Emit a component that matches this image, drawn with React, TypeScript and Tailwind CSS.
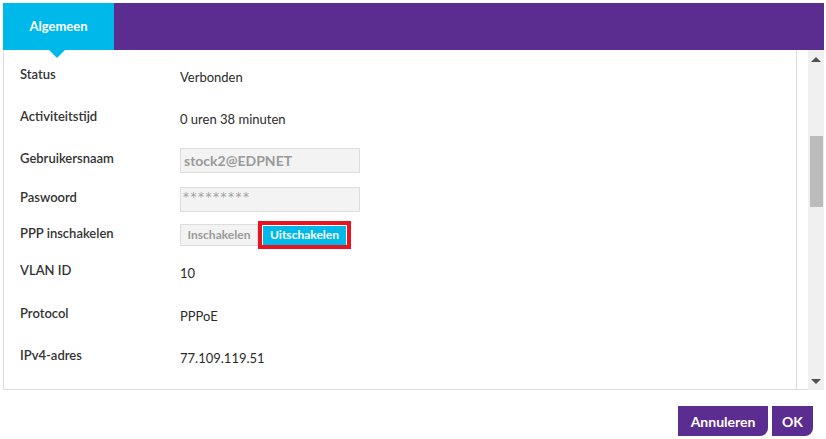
import React from "react";

const font = { fontFamily: "Lato, 'Open Sans', sans-serif" };

type Row = { label: string; h: string; value: React.ReactNode };

function TextValue({ children }: { children: React.ReactNode }) {
  return <span className="mt-[6px] text-[13px] text-[#2b2b2b]">{children}</span>;
}

export default function App() {
  const rows: Row[] = [
    { label: "Status", h: "h-[42px]", value: <TextValue>Verbonden</TextValue> },
    { label: "Activiteitstijd", h: "h-[42px]", value: <TextValue>0 uren 38 minuten</TextValue> },
    {
      label: "Gebruikersnaam",
      h: "h-[42px]",
      value: (
        <div className="mt-[3px] flex h-[25px] w-[180px] items-center border border-[#ddd] bg-[#f3f3f3] px-[3px] text-[14px] font-bold text-[#9a9a9a]">
          stock2@EDPNET
        </div>
      ),
    },
    {
      label: "Paswoord",
      h: "h-[36px]",
      value: (
        <div className="mt-[3px] flex h-[25px] w-[180px] items-start border border-[#ddd] bg-[#f3f3f3] px-[2px] pt-[2px] font-['DejaVu_Sans',sans-serif] text-[12px] leading-[14px] tracking-[1.5px] text-[#a0a0a0]">
          *********
        </div>
      ),
    },
    {
      label: "PPP inschakelen",
      h: "h-[36px]",
      value: (
        <div className="mt-[2px] flex items-center">
          <div className="flex h-[22px] w-[78px] items-center justify-center border border-[#ddd] bg-[#f3f3f3] text-[12px] font-bold text-[#9a9a9a]">
            Inschakelen
          </div>
          <div className="flex h-[28px] w-[93px] items-center justify-center border-[4px] border-[#e8141f] bg-white">
            <div className="flex h-[19px] w-[83px] items-center justify-center bg-[#00b9eb] text-[12px] font-bold text-white">
              Uitschakelen
            </div>
          </div>
        </div>
      ),
    },
    { label: "VLAN ID", h: "h-[38px]", value: <TextValue>10</TextValue> },
    { label: "Protocol", h: "h-[48px]", value: <TextValue>PPPoE</TextValue> },
    { label: "IPv4-adres", h: "h-[36px]", value: <TextValue>77.109.119.51</TextValue> },
  ];

  return (
    <div className="h-[439px] w-[826px] overflow-hidden bg-white" style={font}>
      <div className="pl-[3px] pt-[3px]">
        <div className="flex h-[47px] w-[821px] bg-[#5c2d91]">
          <div className="relative flex w-[111px] items-center justify-center bg-[#00b9eb] text-[13px] font-bold text-white">
            Algemeen
            <div className="absolute left-[46px] top-[47px] h-0 w-0 border-l-[8px] border-r-[8px] border-t-[8px] border-l-transparent border-r-transparent border-t-[#00b9eb]" />
          </div>
        </div>
        <div className="flex h-[340px]">
          <div className="w-[794px] border-b border-l border-r border-[#dcdcdc] pt-[4px]">
            {rows.map((r) => (
              <div key={r.label} className={`flex items-center ${r.h}`}>
                <div className="w-[176px] pl-[16px] text-[13px] font-semibold text-[#333]">{r.label}</div>
                {r.value}
              </div>
            ))}
          </div>
          <div className="w-[11px] border-b border-[#dcdcdc]" />
          <div className="flex w-[16px] flex-col items-center bg-[#f0f0f0]">
            <div className="mt-[7px] h-0 w-0 border-b-[5px] border-l-[5px] border-r-[5px] border-b-[#505050] border-l-transparent border-r-transparent" />
            <div className="mt-[74px] h-[71px] w-[13px] bg-[#bcbcbc]" />
            <div className="flex-1" />
            <div className="mb-[6px] h-0 w-0 border-l-[5px] border-r-[5px] border-t-[5px] border-l-transparent border-r-transparent border-t-[#505050]" />
          </div>
        </div>
        <div className="mt-[16px] flex w-[810px] justify-end gap-[4px]">
          <button className="h-[30px] w-[90px] rounded-br-[8px] bg-[#5c2d91] text-[14px] font-bold text-white">
            Annuleren
          </button>
          <button className="h-[30px] w-[41px] rounded-br-[8px] bg-[#5c2d91] text-[14px] font-bold text-white">
            OK
          </button>
        </div>
      </div>
    </div>
  );
}
